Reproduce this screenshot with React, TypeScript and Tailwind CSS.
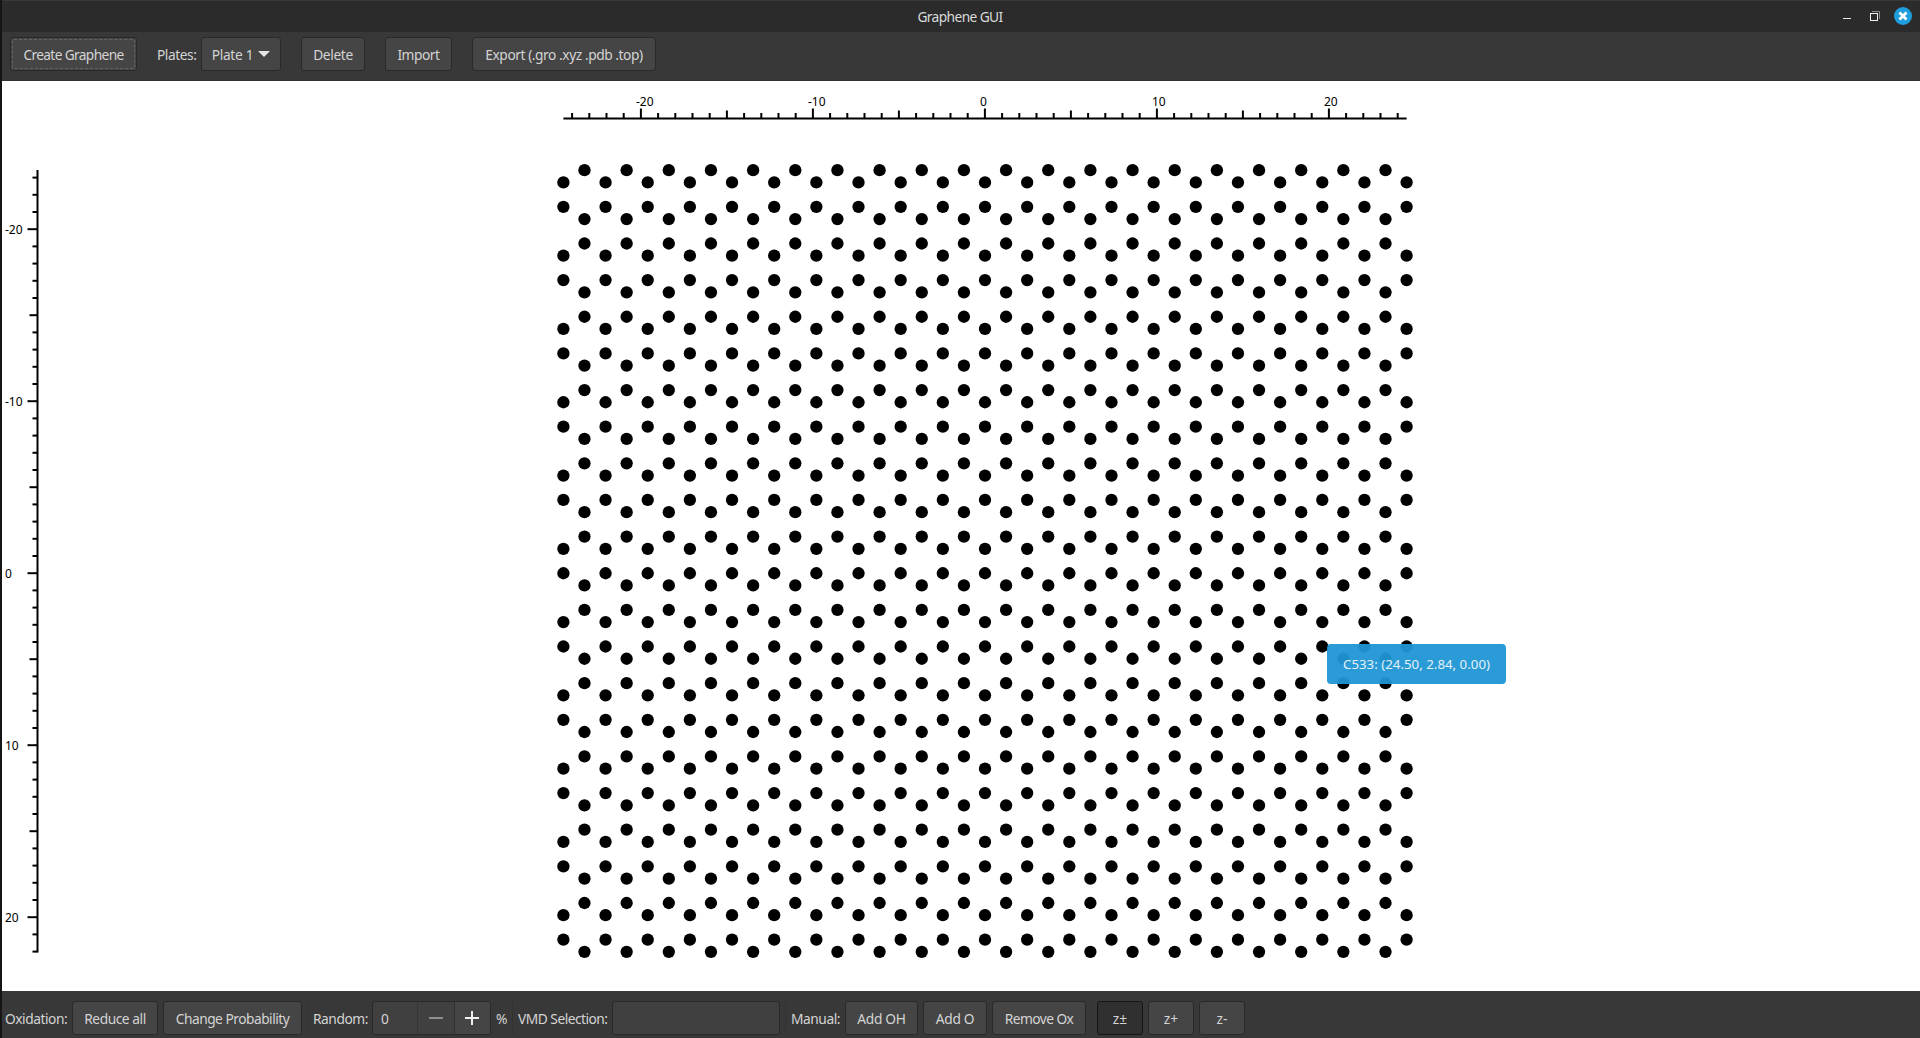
import React from "react";

const UNIT = 17.2;
const ORIGIN_X = 984.9;
const ORIGIN_Y = 573.2;

const range = (from: number, to: number) =>
  Array.from({ length: to - from + 1 }, (_, i) => from + i);

const ROW_OFFSETS = [0, 12.21, 36.64, 48.85];

function Lattice() {
  const dots: React.ReactNode[] = [];
  for (let row = 0; row < 44; row++) {
    const kind = row % 4;
    const y = 170.2 + Math.floor(row / 4) * 73.28 + ROW_OFFSETS[kind];
    const start = kind === 0 || kind === 3 ? 1 : 0;
    for (let col = start; col <= 40; col += 2) {
      dots.push(<circle key={`${row}-${col}`} cx={563.4 + col * 21.08} cy={y} r={6.15} />);
    }
  }
  return <g>{dots}</g>;
}

function Rulers() {
  const xLabels: [string, number][] = [["-20", 636], ["-10", 808], ["0", 980], ["10", 1152], ["20", 1324]];
  const yLabels: [string, number][] = [["-20", 234], ["-10", 406], ["0", 578], ["10", 750], ["20", 922]];
  return (
    <g stroke="#000" strokeWidth={2}>
      <line x1={563.4} x2={1406.6} y1={118.5} y2={118.5} />
      {range(-24, 24).map((n) => {
        const x = ORIGIN_X + n * UNIT;
        return <line key={n} x1={x} x2={x} y1={118} y2={n % 10 === 0 ? 108.5 : n % 5 === 0 ? 110.5 : 113} />;
      })}
      <line x1={37.5} x2={37.5} y1={170} y2={952.5} />
      {range(-23, 22).map((n) => {
        const y = ORIGIN_Y + n * UNIT;
        return <line key={n} y1={y} y2={y} x1={n % 10 === 0 ? 27.5 : n % 5 === 0 ? 29.5 : 32.5} x2={37.5} />;
      })}
      <g stroke="none" className="font-['Noto_Sans',sans-serif] text-[12px] tracking-normal">
        {xLabels.map(([t, x]) => (
          <text key={t} x={x} y={106}>{t}</text>
        ))}
        {yLabels.map(([t, y]) => (
          <text key={t} x={5} y={y}>{t}</text>
        ))}
      </g>
    </g>
  );
}

function Button({ children, className = "" }: { children: React.ReactNode; className?: string }) {
  return (
    <button
      className={`relative flex h-[34px] shrink-0 items-center justify-center whitespace-nowrap rounded-[3px] border border-[#292929] bg-[#454545] pt-0.5 ${className}`}
    >
      {children}
    </button>
  );
}

function Separator() {
  return <div className="mx-[5px] h-[34px] w-px shrink-0 bg-[#323232]" />;
}

function TitleBar() {
  return (
    <header className="flex h-8 shrink-0 items-center border-t border-[#383838] bg-[#2b2b2b]">
      <div className="w-[200px]" />
      <h1 className="flex-1 pr-0.5 text-center tracking-[-0.6px] text-[#dadada]">Graphene GUI</h1>
      <svg className="h-[31px] w-[200px]" viewBox="1720 1 200 31" fill="none">
        <path d="M1843 18.5h8" stroke="#e8e8e8" />
        <path d="M1872 11.5h7.5v7.5" stroke="#8a8a8a" />
        <rect x="1870.5" y="13.5" width="7" height="7" stroke="#f0f0f0" />
        <circle cx="1903" cy="16" r="9" fill="#1f9ede" />
        <path d="M1899.5 12.5l7 7m0-7l-7 7" stroke="#fff" strokeWidth="2.8" />
      </svg>
    </header>
  );
}

export default function App() {
  return (
    <div className="flex h-[1038px] w-[1920px] flex-col overflow-hidden border-l-2 border-[#151515] bg-[#383838] font-['Noto_Sans',sans-serif] text-[13.75px] leading-5 tracking-[-0.45px] text-[#d4d4d4]">
      <TitleBar />
      <nav className="flex h-[49px] shrink-0 items-start border-b border-[#343234] pl-2 pt-[5px]">
        <Button className="w-[127px] tracking-[-0.65px]">
          <span className="absolute inset-px rounded-[2px] border border-dashed border-[#646464]" />
          Create Graphene
        </Button>
        <span className="ml-5 flex h-[34px] w-11 items-center pt-0.5">Plates:</span>
        <Button className="w-20 gap-[5px] tracking-[-0.3px]">
          Plate 1
          <svg className="mb-0.5 h-1.5 w-3" viewBox="0 0 12 6"><path d="M0 0h12L6 6z" fill="#e6e6e6" /></svg>
        </Button>
        <Button className="ml-5 w-16 tracking-[-0.35px]">Delete</Button>
        <Button className="ml-5 w-[67px]">Import</Button>
        <Button className="ml-5 w-[184px] tracking-[-0.44px]">Export (.gro .xyz .pdb .top)</Button>
      </nav>
      <main className="relative h-[910px] shrink-0 bg-white">
        <svg className="block h-[910px] w-[1918px]" viewBox="2 81 1918 910">
          <Rulers />
          <Lattice />
        </svg>
        <div className="absolute left-[1325px] top-[563px] flex h-10 w-[179px] items-center justify-center whitespace-nowrap rounded-[4px] bg-[#1f96d4]/95 text-[13.3px] tracking-[0px] text-[#e4f1f9]">
          C533: (24.50, 2.84, 0.00)
        </div>
      </main>
      <footer className="flex h-[47px] shrink-0 items-center pb-[3px] pl-[3px] pt-[10px]">
        <span className="w-[67px] shrink-0 pt-0.5">Oxidation:</span>
        <Button className="w-[86px] tracking-[-0.45px]">Reduce all</Button>
        <Button className="ml-[5px] w-[139px] tracking-[-0.5px]">Change Probability</Button>
        <Separator />
        <span className="w-[59px] shrink-0 pt-0.5">Random:</span>
        <div className="flex h-[34px] w-[119px] shrink-0 overflow-hidden rounded-[3px] border border-[#292929] bg-[#404040]">
          <span className="flex w-[44px] items-center pl-2 pt-0.5">0</span>
          <span className="flex w-[37px] items-center justify-center border-l border-[#363636]">
            <svg className="h-3.5 w-3.5" viewBox="0 0 14 14"><path d="M0 7h14" stroke="#8f8f8f" strokeWidth="2" /></svg>
          </span>
          <span className="flex w-[36px] items-center justify-center border-l border-[#303030] bg-[#454545] pr-[2px]">
            <svg className="h-3.5 w-3.5" viewBox="0 0 14 14"><path d="M0 7h14M7 0v14" stroke="#f0f0f0" strokeWidth="2" /></svg>
          </span>
        </div>
        <span className="ml-[5px] w-[11px] shrink-0 pt-0.5">%</span>
        <Separator />
        <span className="w-[94px] shrink-0 whitespace-nowrap pt-0.5 tracking-[-0.5px]">VMD Selection:</span>
        <div className="h-[34px] w-[168px] shrink-0 rounded-[3px] border border-[#292929] bg-[#404040]" />
        <Separator />
        <span className="w-[54px] shrink-0 pt-0.5">Manual:</span>
        <Button className="w-[73px] tracking-[-0.3px]">Add OH</Button>
        <Button className="ml-[5px] w-16 tracking-[-0.3px]">Add O</Button>
        <Button className="ml-[5px] w-[94px] tracking-[-0.55px]">Remove Ox</Button>
        <Separator />
        <button className="flex h-[34px] w-[46px] items-center justify-center rounded-[3px] border border-[#151515] bg-[#303030] pt-0.5 tracking-normal">z±</button>
        <Button className="ml-[5px] w-[46px] tracking-normal">z+</Button>
        <Button className="ml-[5px] w-[46px] tracking-normal">z-</Button>
      </footer>
    </div>
  );
}
